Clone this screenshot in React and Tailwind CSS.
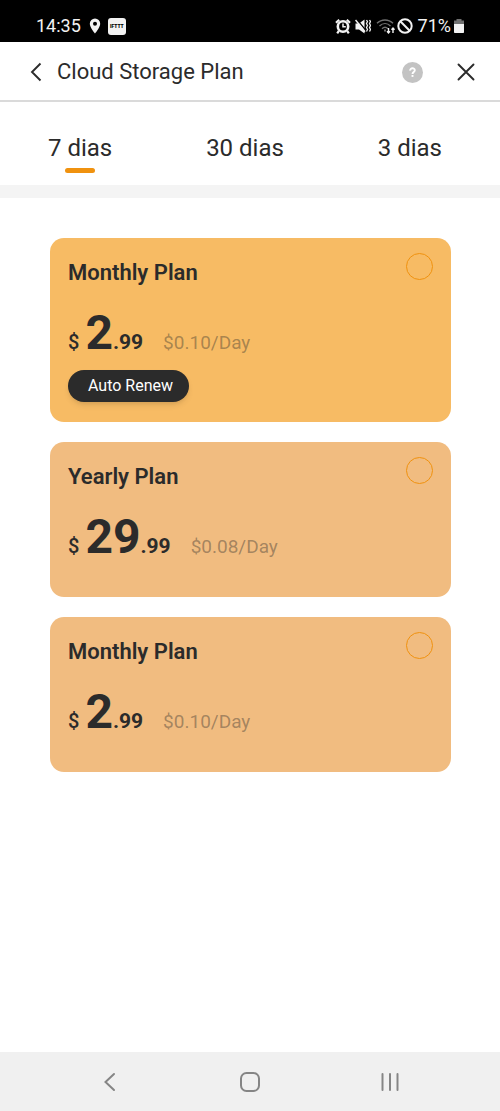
import React, { useState } from 'react';

const TABS = ['7 dias', '30 dias', '3 dias'];

const PLANS = [
    { id: 'monthly-renew', title: 'Monthly Plan', whole: '2', cents: '.99', perDay: '$0.10/Day', autoRenew: true },
    { id: 'yearly', title: 'Yearly Plan', whole: '29', cents: '.99', perDay: '$0.08/Day' },
    { id: 'monthly', title: 'Monthly Plan', whole: '2', cents: '.99', perDay: '$0.10/Day' },
];

const StatusBar = () => (
    <div className="flex h-[42px] items-end justify-between bg-black pb-[3px] pl-9 pr-[35px] text-[#f2f2f2]">
        <div className="flex h-[26px] items-center">
            <span className="text-lg">14:35</span>
            {/* Location pin */}
            <svg width="12" height="18" viewBox="0 0 12 18" className="ml-2">
                <path fillRule="evenodd" fill="currentColor" d="M6 1.500A5.200 5.200 0 0 0 .8 6.700C.8 10.400 6 16.500 6 16.500S11.200 10.400 11.200 6.700A5.200 5.200 0 0 0 6 1.500ZM6 4.700a2 2 0 1 1 0 4 2 2 0 0 1 0-4Z" />
            </svg>
            <span className="ml-[7px] flex h-[17px] w-[18px] items-center justify-center rounded-[3px] bg-[#f2f2f2] text-[5px] font-black leading-none text-black">
                IFTTT
            </span>
        </div>
        <div className="flex h-[26px] items-center">
            {/* Alarm */}
            <svg width="16" height="17" viewBox="0 0 16 17" fill="none" stroke="currentColor">
                <circle cx="8" cy="8.500" r="5.200" strokeWidth="2.600" />
                <path d="M8 5.500v3.300h2.800" strokeWidth="1.500" />
                <path d="M1 4.700 4.200 1.700M15 4.700 11.800 1.700M3.800 13 2.200 15.300M12.200 13l1.600 2.300" strokeWidth="2.200" />
            </svg>
            {/* Muted, vibrating */}
            <svg width="16" height="17" viewBox="0 0 16 17" className="ml-1">
                <path fill="currentColor" d="M.5 5.500H4L9.500 1.500v14L4 11.500H.5Z" />
                <path d="M1.500 1 10.500 12" stroke="#000" strokeWidth="1.300" />
                <path d="M.5 2 10 13.700" stroke="currentColor" strokeWidth="1.500" />
                <path d="m11.500 2 1 1.500-1 2 1 2-1 2 1 2-1 2M14.500 2l1 1.500-1 2 1 2-1 2 1 2-1 2" fill="none" stroke="currentColor" strokeWidth="1.300" />
            </svg>
            {/* Wi-Fi with traffic arrows */}
            <svg width="20" height="17" viewBox="0 0 20 17" fill="none" className="ml-[5px]">
                <path d="M1 5.300C5.500.8 12.500.8 17 5.300M3.500 8C6.800 4.800 11.200 4.800 14.500 8M6 10.700C7.800 9 10.200 9 12 10.700" stroke="#707070" strokeWidth="1.400" />
                <path d="M8 12.500h2" stroke="#707070" strokeWidth="2" />
                <path d="M12.500 10v5M11 13.300l1.500 1.700 1.500-1.700M17 15v-5M15.500 11.700 17 10l1.500 1.700" stroke="currentColor" strokeWidth="1.400" />
            </svg>
            <svg width="16" height="16" viewBox="0 0 16 16" fill="none" stroke="currentColor" strokeWidth="2" className="ml-px">
                <circle cx="8" cy="8" r="6.700" />
                <path d="m3.300 3.300 9.400 9.400" />
            </svg>
            <span className="ml-[5px] text-lg">71%</span>
            {/* Battery */}
            <svg width="12" height="16" viewBox="0 0 12 16" className="ml-0.5">
                <path fill="#707070" d="M3.500 1h5v1.500H11V7H1V2.500h2.500Z" />
                <path fill="currentColor" d="M1 6h10v8.200a.8.800 0 0 1-.8.800H1.800a.8.800 0 0 1-.8-.8Z" />
            </svg>
        </div>
    </div>
);

const Header = () => (
    <header className="flex h-[60px] items-center border-b-2 border-[#dadada] bg-white pl-7 pr-[25px] pt-0.5">
        <button type="button" aria-label="Back" className="flex h-6 w-4 items-center justify-center">
            <svg width="14" height="20" viewBox="0 0 14 20" fill="none" stroke="currentColor" strokeWidth="1.900">
                <path d="M11.500 1.500 3 10l8.500 8.500" />
            </svg>
        </button>
        <h1 className="ml-[13px] flex-1 text-[22px] leading-7">Cloud Storage Plan</h1>
        <button type="button" aria-label="Help" className="flex size-[21px] items-center justify-center rounded-full bg-[#c3c3c3]">
            <svg width="9" height="12" viewBox="0 0 9 12" fill="none" stroke="#fff" strokeWidth="1.900">
                <path d="M2.200 4.600C2 1.600 6.800 1.400 6.800 4.200c0 1.700-2.300 1.800-2.300 3.800" />
                <path d="M4.500 9v1.900" />
            </svg>
        </button>
        <button type="button" aria-label="Close" className="ml-[34px] flex size-[18px] items-center justify-center">
            <svg width="18" height="18" viewBox="0 0 18 18" fill="none" stroke="currentColor" strokeWidth="1.900" strokeLinecap="round">
                <path d="m1.500 1.500 15 15M16.500 1.500l-15 15" />
            </svg>
        </button>
    </header>
);

const PlanCard = ({ plan, checked, onSelect }) => (
    <section
        className={
            plan.autoRenew
                ? 'rounded-[14px] bg-[#f7bb64] px-[18px] pb-5 pt-[15px]'
                : 'rounded-[14px] bg-[#f1bc80] px-[18px] pb-[35px] pt-[15px]'
        }
    >
        <div className="flex items-start justify-between">
            <label htmlFor={plan.id} className="pt-1.5 text-[22px] font-semibold leading-7">
                {plan.title}
            </label>
            <input
                type="radio"
                id={plan.id}
                name="plan"
                checked={checked}
                onChange={onSelect}
                className="size-[27px] appearance-none rounded-full border border-[#f0920f] checked:bg-[#f0920f]"
            />
        </div>
        <div className="mt-[21px] flex items-baseline">
            <span className="text-xl font-medium leading-7">$</span>
            <span className="ml-1.5 text-5xl font-bold leading-[50px]">{plan.whole}</span>
            <span className="text-[21px] font-bold leading-7">{plan.cents}</span>
            <span className="ml-5 text-[19px] leading-7 text-[#2b2b2b]/40">{plan.perDay}</span>
        </div>
        {plan.autoRenew && (
            <button type="button" className="mt-3 block h-8 rounded-full bg-[#2b2b2b] pl-5 pr-4 text-base text-white shadow-md">
                Auto Renew
            </button>
        )}
    </section>
);

const NavBar = () => (
    <nav className="flex h-[59px] items-center justify-between bg-[#f0f0f0] px-[100px] text-[#858585]">
        <button type="button" aria-label="Back" className="flex size-5 items-center justify-center">
            <svg width="20" height="20" viewBox="0 0 20 20" fill="none" stroke="currentColor" strokeWidth="2" strokeLinecap="round">
                <path d="M14 2 5.500 10l8.500 8" />
            </svg>
        </button>
        <button type="button" aria-label="Home" className="flex size-5 items-center justify-center">
            <svg width="20" height="20" viewBox="0 0 20 20" fill="none" stroke="currentColor" strokeWidth="2">
                <rect x="1" y="1" width="18" height="18" rx="5.500" />
            </svg>
        </button>
        <button type="button" aria-label="Recent apps" className="flex size-5 items-center justify-center">
            <svg width="20" height="20" viewBox="0 0 20 20" fill="none" stroke="currentColor" strokeWidth="2" strokeLinecap="round">
                <path d="M2.500 2v16M10 2v16M17.500 2v16" />
            </svg>
        </button>
    </nav>
);

const App = () => {
    const [tab, setTab] = useState(TABS[0]);
    const [selected, setSelected] = useState(null);

    return (
        <div className="flex min-h-screen flex-col bg-white font-['Roboto',sans-serif] text-[#2b2b2b]">
            <StatusBar />
            <Header />

            {/* Duration tabs */}
            <div className="flex justify-between border-b-[13px] border-[#f4f4f4] pb-3 pl-12 pr-[58px] pt-[30px]">
                {TABS.map((name) => (
                    <button key={name} type="button" onClick={() => setTab(name)} className="flex flex-col items-center gap-1">
                        <span className="text-2xl">{name}</span>
                        <span className={name === tab ? 'h-[5px] w-[30px] rounded-full bg-[#f0920f]' : 'h-[5px] w-[30px]'} />
                    </button>
                ))}
            </div>

            {/* Plans */}
            <main className="flex flex-1 flex-col gap-5 py-10 pl-[50px] pr-[49px]">
                {PLANS.map((plan) => (
                    <PlanCard
                        key={plan.id}
                        plan={plan}
                        checked={selected === plan.id}
                        onSelect={() => setSelected(plan.id)}
                    />
                ))}
            </main>

            <NavBar />
        </div>
    );
};

export default App;
